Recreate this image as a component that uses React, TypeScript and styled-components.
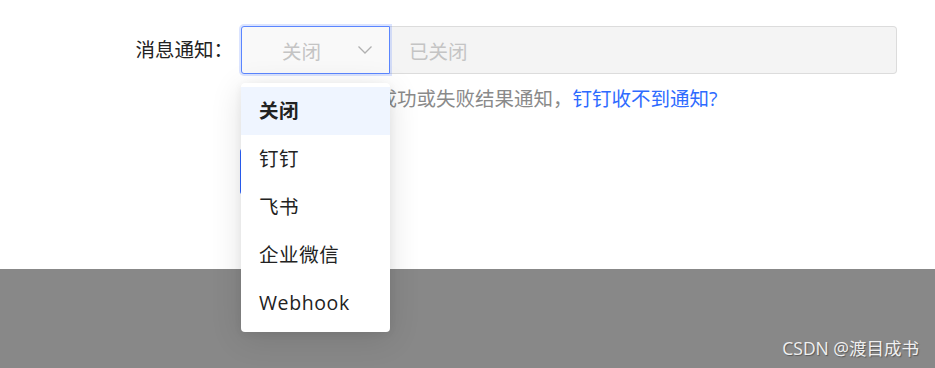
import React from "react";
import styled, { createGlobalStyle } from "styled-components";

const GlobalStyle = createGlobalStyle`
  html, body {
    margin: 0;
    padding: 0;
    background: #ffffff;
  }
  body {
    font-family: "Open Sans", "Noto Sans CJK SC", sans-serif;
    -webkit-font-smoothing: antialiased;
  }
`;

const Page = styled.div`
  width: 935px;
  height: 368px;
  display: flex;
  flex-direction: column;
  overflow: hidden;
`;

const Panel = styled.div`
  height: 269px;
  background: #ffffff;
  padding-top: 26px;
  box-sizing: border-box;
`;

const FormRow = styled.div`
  display: grid;
  grid-template-columns: 233px 656px;
  column-gap: 8px;
  align-items: start;
`;

const Label = styled.label`
  height: 48px;
  line-height: 48px;
  text-align: right;
  font-size: 19.5px;
  color: #222;
`;

const Field = styled.div`
  display: flex;
  flex-direction: column;
`;

const Control = styled.div`
  display: flex;
  height: 48px;
  position: relative;
`;

const SelectBox = styled.div`
  width: 149px;
  box-sizing: border-box;
  border: 1px solid #5b86ff;
  box-shadow: 0 0 0 2px rgba(91, 134, 255, 0.22);
  border-radius: 3px 0 0 3px;
  background: #f9f9f9;
  display: flex;
  align-items: center;
  justify-content: space-between;
  padding: 0 16px 0 40px;
  position: relative;
  z-index: 2;
`;

const SelectValue = styled.span`
  font-size: 19.5px;
  color: #c4c4c4;
`;

const Chevron = styled.svg`
  width: 16px;
  height: 16px;
  color: #b0b0b0;
`;

const TextInput = styled.div`
  flex: 1;
  box-sizing: border-box;
  border: 1px solid #dcdcdc;
  border-left: none;
  border-radius: 0 4px 4px 0;
  background: #f4f4f4;
  display: flex;
  align-items: center;
  padding-left: 19px;
  font-size: 19.5px;
  color: #c4c4c4;
`;

const Help = styled.div`
  margin-top: 12px;
  font-size: 19.5px;
  line-height: 26px;
  color: #8a8a8a;
  white-space: nowrap;
`;

const HelpLink = styled.a`
  color: #2e6bff;
  text-decoration: none;
`;

const SubmitButton = styled.button`
  margin-top: 36px;
  width: 110px;
  height: 47px;
  border: none;
  border-radius: 4px;
  background: #2c62ff;
  color: #fff;
  font-size: 18px;
  font-family: inherit;
  margin-left: -1px;
`;

const Menu = styled.ul`
  position: absolute;
  top: 57px;
  left: 0;
  width: 149px;
  margin: 0;
  padding: 4px 0 5px;
  list-style: none;
  background: #ffffff;
  border-radius: 4px;
  box-shadow: 0 6px 32px rgba(0, 0, 0, 0.12), 0 2px 8px rgba(0, 0, 0, 0.06);
  z-index: 10;
`;

const MenuItem = styled.li<{ $active?: boolean }>`
  height: 48px;
  line-height: 48px;
  padding-left: 18px;
  font-size: 19.5px;
  letter-spacing: 0.6px;
  color: #222;
  font-weight: ${(p) => (p.$active ? 700 : 400)};
  background: ${(p) => (p.$active ? "#eff5ff" : "transparent")};
`;

const Footer = styled.div`
  flex: 1;
  background: #888888;
  display: flex;
  justify-content: flex-end;
  align-items: flex-end;
  padding: 0 16px 8px 0;
`;

const Watermark = styled.span`
  font-size: 17.5px;
  color: #f0f0f0;
  text-shadow: 1px 1px 1px rgba(0, 0, 0, 0.35);
`;

const options = ["关闭", "钉钉", "飞书", "企业微信", "Webhook"];

export default function App() {
  return (
    <>
      <GlobalStyle />
      <Page>
        <Panel>
          <FormRow>
            <Label>消息通知：</Label>
            <Field>
              <Control>
                <SelectBox>
                  <SelectValue>关闭</SelectValue>
                  <Chevron viewBox="0 0 16 16" fill="none">
                    <path d="M1.5 4.5 L8 11 L14.5 4.5" stroke="currentColor" strokeWidth="1.3" />
                  </Chevron>
                </SelectBox>
                <TextInput>已关闭</TextInput>
                <Menu>
                  {options.map((o, i) => (
                    <MenuItem key={o} $active={i === 0}>
                      {o}
                    </MenuItem>
                  ))}
                </Menu>
              </Control>
              <Help>
                开启后接收任务成功或失败结果通知，
                <HelpLink href="#">钉钉收不到通知?</HelpLink>
              </Help>
              <div>
                <SubmitButton>保存</SubmitButton>
              </div>
            </Field>
          </FormRow>
        </Panel>
        <Footer>
          <Watermark>CSDN @渡目成书</Watermark>
        </Footer>
      </Page>
    </>
  );
}
